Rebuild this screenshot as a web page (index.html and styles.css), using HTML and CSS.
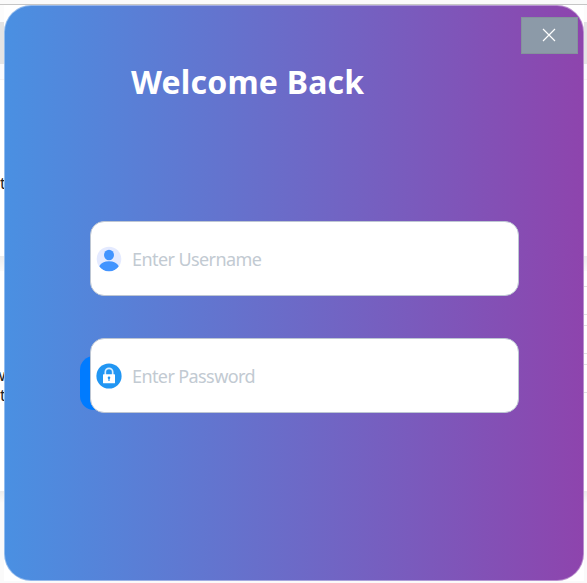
FILE: index.html
```html
<!DOCTYPE html>
<html lang="en">
<head>
<meta charset="utf-8">
<title>Login</title>
<link rel="stylesheet" href="styles.css">
</head>
<body>
<div class="backdrop">
  <div class="titlebar"></div>
  <div class="gap-top"></div>
  <div class="toolbar"></div>
  <div class="subbar"></div>
  <div class="panel panel-first"><span class="peek">t</span></div>
  <div class="divider"></div>
  <div class="panel panel-second"><span class="peek peek-w">w</span><span class="peek">ti</span>
    <div class="rows"><i></i><i></i><i></i></div>
  </div>
  <div class="footer"></div>
</div>
<div class="window">
<main class="dialog">
  <button class="close" aria-label="Close">
    <svg width="14" height="14" viewBox="0 0 14 14"><path d="M1 1L13 13M13 1L1 13"/></svg>
  </button>
  <h1 class="title">Welcome Back</h1>
  <form class="fields">
    <div class="field">
      <svg class="icon" viewBox="0 0 26 26">
        <defs><clipPath id="disc"><circle cx="13" cy="13" r="12.5"/></clipPath></defs>
        <circle cx="13" cy="13" r="12.3" fill="#e4eaff"/>
        <ellipse cx="13" cy="9" rx="5" ry="5.2" fill="#4294ff"/>
        <path clip-path="url(#disc)" fill="#4294ff" d="M3.2 20.3C5 17 8.5 15.3 13 15.3S21 17 22.8 20.3C20.5 23.8 17 25.6 13 25.6S5.500 23.800 3.200 20.300Z"/>
      </svg>
      <span class="placeholder user">Enter Username</span>
    </div>
    <div class="field-wrap">
      <span class="accent"></span>
      <div class="field">
        <svg class="icon" viewBox="0 0 26 26">
          <circle cx="13" cy="13" r="12.6" fill="#2196f3"/>
          <path d="M9.300 12V9A3.700 3.700 0 0 1 16.700 9V12" fill="none" stroke="#d8edff" stroke-width="1.700"/>
          <rect x="7" y="11.300" width="12" height="9" rx=".6" fill="#fff"/>
          <circle cx="13" cy="14.800" r="1.300" fill="#2196f3"/>
          <path d="M12.400 15h1.200v3h-1.200z" fill="#2196f3"/>
        </svg>
        <span class="placeholder pass">Enter Password</span>
      </div>
    </div>
  </form>
</main>
</div>
</body>
</html>
```
FILE: styles.css
```css
* { box-sizing: border-box; }
body {
  margin: 0;
  width: 587px;
  height: 583px;
  position: relative;
  overflow: hidden;
  background: #fff;
  font-family: "Noto Sans", "Open Sans", sans-serif;
}
.backdrop { display: flex; flex-direction: column; height: 583px; }
.titlebar { height: 5px; flex: none; background: #fafafa; border-bottom: 1px solid #c6c6c6; }
.gap-top { height: 17px; background: #fcfcfc; }
.toolbar { height: 42px; background: #e4e4e4; }
.subbar { height: 16px; background: #fafbfd; border-bottom: 1px solid #f3f3f3; }
.panel { display: flex; flex-direction: column; overflow: hidden; }
.panel-first { height: 176px; padding-top: 93px; }
.divider { height: 15px; background: linear-gradient(#ececec, #fafafa); }
.panel-second { height: 220px; padding-top: 94px; position: relative; }
.peek { font-size: 16px; line-height: 20px; height: 20px; color: #222; white-space: nowrap; }
.peek-w { margin-left: -7px; }
.rows {
  position: absolute;
  top: 15px;
  right: 0;
  width: 4px;
  display: grid;
  gap: 10px;
}
.rows i {
  height: 29px;
  border-top: 1px solid #e2e2e2;
  border-bottom: 1px solid #e2e2e2;
}
.footer { flex: 1; background: linear-gradient(#ececec, #fafafa 12px); }
.window {
  position: absolute;
  left: 4px;
  top: 5px;
  width: 580px;
  height: 576px;
  background: #fff;
}
.dialog {
  position: relative;
  height: 576px;
  padding: 53px 65px 0 86px;
  border: 1px solid rgba(255, 255, 255, .4);
  border-radius: 27px;
  background: linear-gradient(90deg, #4a90e2, #8e44ad) border-box;
}
.close {
  position: absolute;
  top: 11px;
  right: 5px;
  width: 57px;
  height: 37px;
  display: grid;
  place-items: center;
  padding: 0 2px 1px 0;
  background: #8c9aa8;
  border: 1px solid #85929c;
}
.close svg { display: block; }
.close path { fill: none; stroke: #fff; stroke-width: 1.2; }
.title {
  margin: 0 0 0 40px;
  height: 48px;
  font-size: 32px;
  line-height: 46px;
  font-weight: 700;
  letter-spacing: .2px;
  color: #fff;
  white-space: nowrap;
}
.fields { display: grid; gap: 42px; margin: 114px 0 0 -1px; }
.field {
  position: relative;
  display: flex;
  align-items: center;
  width: 429px;
  height: 75px;
  padding-left: 5px;
  background: #fff;
  border: 1px solid #bdc6d3;
  border-radius: 14px;
}
.field-wrap { position: relative; }
.accent {
  position: absolute;
  left: -10px;
  top: 18px;
  width: 40px;
  height: 54px;
  border-radius: 14px;
  background: #007bff;
}
.icon { width: 26px; height: 26px; flex: none; }
.placeholder {
  margin-left: 10px;
  font-size: 18px;
  line-height: 26px;
  color: #c2cad2;
  white-space: nowrap;
}
.user { letter-spacing: -.58px; }
.pass { letter-spacing: -.6px; }
```
